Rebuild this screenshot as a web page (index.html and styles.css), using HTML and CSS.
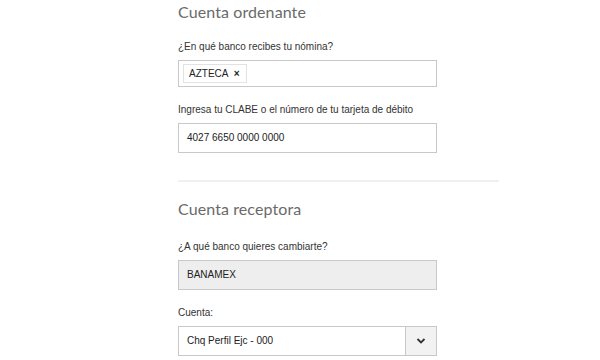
FILE: index.html
```html
<!DOCTYPE html>
<html lang="es">

<head>
    <meta charset="UTF-8">
    <meta name="viewport" content="width=device-width, initial-scale=1.0">
    <title>Portabilidad de nómina</title>
    <link rel="stylesheet" href="styles.css">
</head>

<body>

    <section class="form">
        <h2 class="section-title">Cuenta ordenante</h2>

        <div class="field">
            <label class="label">¿En qué banco recibes tu nómina?</label>
            <div class="input input-tags">
                <span class="tag">AZTECA <span class="tag-x">&times;</span></span>
            </div>
        </div>

        <div class="field">
            <label class="label">Ingresa tu CLABE o el número de tu tarjeta de débito</label>
            <div class="input">4027 6650 0000 0000</div>
        </div>

        <hr class="divider">

        <h2 class="section-title section-title-2">Cuenta receptora</h2>

        <div class="field">
            <label class="label">¿A qué banco quieres cambiarte?</label>
            <div class="input input-disabled">BANAMEX</div>
        </div>

        <div class="field">
            <label class="label">Cuenta:</label>
            <div class="select">
                <span class="select-value">Chq Perfil Ejc - 000</span>
                <span class="select-btn">
                    <svg width="10" height="6" viewBox="0 0 10 6">
                        <path d="M1.5 1 L5 4.5 L8.5 1" fill="none" stroke="#333" stroke-width="1.8"/>
                    </svg>
                </span>
            </div>
        </div>
    </section>

</body>

</html>
```

FILE: styles.css
```css
body {
    font-family: "Liberation Sans", Arial, sans-serif;
    margin: 0;
    padding: 0;
    background: #fff;
    color: #333;
}

.form {
    width: 321px;
    margin-left: 178px;
}

.section-title {
    font-family: Lato, "Open Sans", sans-serif;
    font-weight: 400;
    font-size: 16px;
    letter-spacing: 0.1px;
    line-height: 24px;
    color: #6a6a6a;
    margin: 0 0 16px 0;
}

.section-title-2 {
    margin-bottom: 19px;
}

.field {
    margin-bottom: 16px;
}

.label {
    display: block;
    font-size: 10px;
    line-height: 14px;
    color: #333;
    margin-bottom: 6px;
}

.input {
    box-sizing: border-box;
    width: 259px;
    height: 30px;
    border: 1px solid #c8c8c8;
    padding: 0 8px;
    font-size: 10px;
    line-height: 28px;
    color: #222;
}

.input-tags {
    height: 27px;
    padding: 0 4px;
    display: flex;
    align-items: center;
}

.tag {
    border: 1px solid #e2e2e2;
    padding: 0 6px 0 5px;
    height: 17px;
    line-height: 17px;
    font-size: 10px;
}

.tag-x {
    margin-left: 3px;
    font-weight: bold;
    font-size: 10px;
}

.input-disabled {
    background: #eee;
}

.divider {
    border: 0;
    border-top: 2px solid #f0f0f0;
    margin: 27px 0 15px 0;
}

.select {
    box-sizing: border-box;
    width: 259px;
    height: 30px;
    border: 1px solid #c8c8c8;
    display: flex;
    font-size: 10px;
    color: #222;
}

.select-value {
    flex: 1;
    padding: 0 8px;
    line-height: 28px;
}

.select-btn {
    width: 30px;
    border-left: 1px solid #c8c8c8;
    background: #f2f2f2;
    display: flex;
    align-items: center;
    justify-content: center;
}
```
